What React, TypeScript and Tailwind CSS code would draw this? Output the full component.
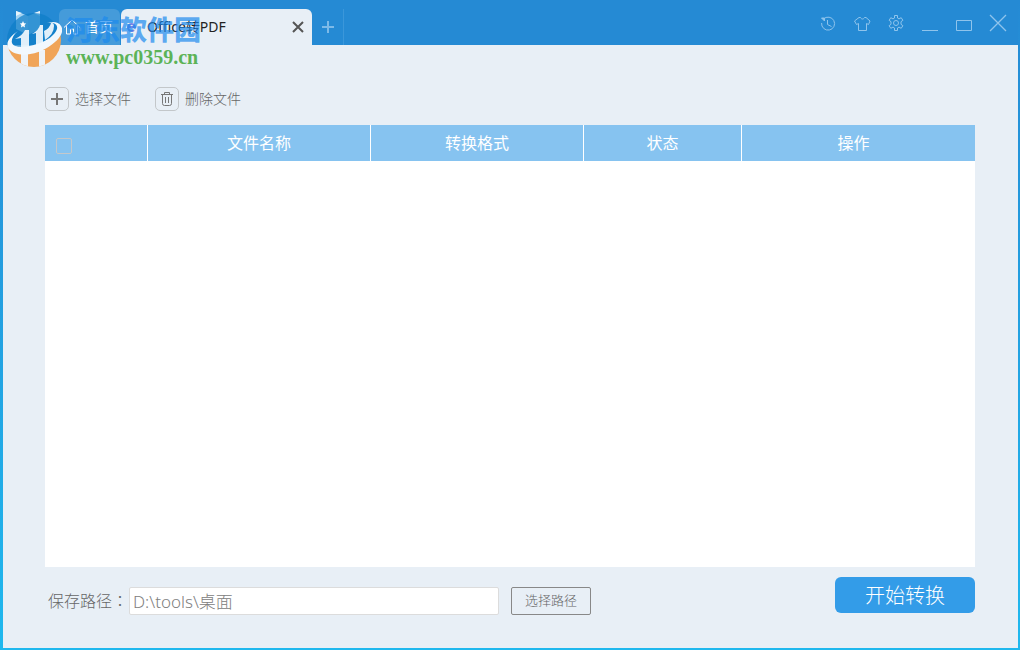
import { useState, type ReactNode } from "react";

const COLUMNS = [
  { id: "name", label: "文件名称", width: "w-[223px]" },
  { id: "format", label: "转换格式", width: "w-[213px]" },
  { id: "status", label: "状态", width: "w-[158px]" },
  { id: "action", label: "操作", width: "pr-[10px]" },
];

function AppLogo() {
  return (
    <svg width="24" height="24" viewBox="0 0 24 24" aria-hidden="true">
      <path d="M0 0 12 5v19L0 18z" fill="#a5d4f3" />
      <path d="M12 5 24 0v18l-12 6z" fill="#8cc8f0" />
      <path d="M0 0l6 2-6 3zM24 0l-6 2 6 3z" fill="#e6f3fb" />
    </svg>
  );
}

function SiteMark() {
  return (
    <svg width="56" height="58" viewBox="0 0 56 58" aria-hidden="true">
      <defs>
        <clipPath id="disc">
          <circle cx="28" cy="30" r="27" />
        </clipPath>
      </defs>
      <g clipPath="url(#disc)">
        <path d="M0 0h56v26C46 38 30 42 14 42L0 36z" fill="#0d7ec8" fillOpacity="0.7" />
        <path d="M0 36c8 10 24 9 37 1 9-5 14-10 19-18v41H0z" fill="#f0a458" />
        <path d="M15 42h7v16h-7zM33 40h6v18h-6z" fill="#eef3f8" />
      </g>
      <path
        d="M9 29q8-4 10-9h4v17h-8v-9zM26 24q7-4 8-9h3v21l-7 3V23zM38 21q6-3 7-8h1q2 0 2 3 0 8-9 14z"
        fill="#f2f8fd"
        fillOpacity="0.92"
      />
      <path
        d="M12 21C3 27-1 33 3 39c6 8 23 7 36 0 14-8 20-17 16-23-2-4-8-5-14-3 7-1 11 1 10 6-2 6-10 12-20 15-12 4-23 4-25-1-1-3 1-8 6-12z"
        fill="#f2f8fd"
      />
      <path d="M17 11l1 2.200 2.200.3-1.600 1.600.4 2.300-2-1.100-2 1.100.4-2.300-1.600-1.600 2.200-.3z" fill="#fff" />
    </svg>
  );
}

function Watermark() {
  return (
    <div className="pointer-events-none absolute left-[6px] top-[10px] flex gap-1">
      <SiteMark />
      <div className="flex flex-col whitespace-nowrap">
        <span className="h-[35px] font-['Noto_Sans_CJK_SC',sans-serif] text-[27px] font-black leading-[38px] text-[#1c8aee]/70">
          河东软件园
        </span>
        <span className="font-['Liberation_Serif',serif] text-xl font-bold leading-6 text-[#5cb357]">
          www.pc0359.cn
        </span>
      </div>
    </div>
  );
}

function WindowButton({ label, children }: { label: string; children: ReactNode }) {
  return (
    <button
      aria-label={label}
      className="flex h-[18px] w-[18px] items-center justify-center text-[#8fc4ec] hover:text-white"
    >
      <svg width="18" height="18" viewBox="0 0 18 18" fill="none" stroke="currentColor">
        {children}
      </svg>
    </button>
  );
}

function TitleBar() {
  return (
    <header className="flex h-[45px] items-end bg-[#258ad4]">
      <div className="flex h-[34px] w-[56px] items-start pl-[13px]">
        <AppLogo />
      </div>
      <nav className="flex items-end gap-px">
        <button className="flex h-9 w-[61px] items-center gap-1 rounded-t-md bg-white/15 pl-1 text-sm text-white">
          <svg width="18" height="16" viewBox="0 0 18 16" fill="none" stroke="currentColor" aria-hidden="true">
            <path d="M1 8.500 9 1l8 7.500M3.500 7v8h4v-5h3v5h4V7" />
          </svg>
          首页
        </button>
        <div className="flex h-9 w-[191px] items-center rounded-t-md bg-[#e8eff6] pl-1 pr-2">
          <svg width="14" height="14" viewBox="0 0 14 14" fill="none" stroke="#7a83e6" strokeWidth="2" aria-hidden="true">
            <path d="M3 7h7a3.500 3.500 0 1 0-1 3" />
          </svg>
          <span className="flex-1 pl-2 text-sm text-[#222]">Office转PDF</span>
          <button aria-label="关闭标签" className="text-[#555]">
            <svg width="12" height="12" viewBox="0 0 12 12" stroke="currentColor" strokeWidth="2">
              <path d="M1 1l10 10M11 1 1 11" />
            </svg>
          </button>
        </div>
      </nav>
      <button
        aria-label="新建标签"
        className="flex h-9 w-8 items-center justify-center border-r border-[#3b97da] text-[#7dbae8]"
      >
        <svg width="12" height="12" viewBox="0 0 12 12" stroke="currentColor" strokeWidth="2">
          <path d="M6 0v12M0 6h12" />
        </svg>
      </button>
      <div className="ml-auto flex gap-4 self-start pr-[11px] pt-[14px]">
        <WindowButton label="历史记录">
          <path d="M4.500 5A6.500 6.500 0 1 1 2.600 9M8.500 6v4.500l4 2" />
          <path d="M2.500 4h3v3z" fill="currentColor" />
        </WindowButton>
        <WindowButton label="换肤">
          <path d="M6 3.500 1.500 7l2 3.500 2-1v7h8v-7l2 1L17 7l-4-3.500h-1.500c-.8 2-3.200 2-4 0z" />
        </WindowButton>
        <WindowButton label="设置">
          <path d="M7.500 1.500h3V4l1.500.9 2.200-1.200 1.700 2.600L14 7.700v2.600l1.900 1.400-1.700 2.600-2.200-1.200-1.500.9v2.500h-3V14L6 13.100l-2.200 1.200-1.700-2.600L4 10.300V7.700L2.100 6.300l1.700-2.600L6 4.900 7.500 4z" />
          <circle cx="9" cy="9" r="2.500" />
        </WindowButton>
        <WindowButton label="最小化">
          <path d="M1 16.500h16" />
        </WindowButton>
        <WindowButton label="最大化">
          <path d="M1.500 6.500h15v10h-15z" />
        </WindowButton>
        <WindowButton label="关闭">
          <path d="M1 1l16 16M17 1 1 17" strokeWidth="1.300" />
        </WindowButton>
      </div>
    </header>
  );
}

function ToolButton({ label, children }: { label: string; children: ReactNode }) {
  return (
    <button className="flex items-center gap-[6px] text-sm font-light text-[#666]">
      <span className="flex h-6 w-6 items-center justify-center rounded-[5px] border border-[#c3c7ca]">
        {children}
      </span>
      {label}
    </button>
  );
}

export default function App() {
  const [allChecked, setAllChecked] = useState(false);
  const [path, setPath] = useState("D:\\tools\\桌面");

  return (
    <div className="relative flex min-h-screen flex-col bg-linear-to-b from-[#258ad4] to-[#1fb8ee] pb-[2px] pl-[3px] pr-[2px] font-['Noto_Sans','Noto_Sans_CJK_SC',sans-serif]">
      <TitleBar />
      <main className="flex flex-1 flex-col bg-[#e8eff6] pt-[42px] pr-[43px] pb-[33px] pl-[42px]">
        <div className="flex gap-6">
          <ToolButton label="选择文件">
            <svg width="14" height="14" viewBox="0 0 14 14" stroke="#777" strokeWidth="2">
              <path d="M7 1v12M1 7h12" />
            </svg>
          </ToolButton>
          <ToolButton label="删除文件">
            <svg width="14" height="16" viewBox="0 0 14 16" fill="none" stroke="#777">
              <path d="M1 3.500h12M4.500 3.500v-2h5v2M2.500 3.500v9q0 2 2 2h5q2 0 2-2v-9M5.500 6v6M8.500 6v6" />
            </svg>
          </ToolButton>
        </div>

        <div className="mt-[14px] flex-1 bg-white">
          <table className="w-full table-fixed border-separate border-spacing-0">
            <thead>
              <tr className="h-9 bg-[#86c3f0] text-base text-white">
                <th className="w-[103px] border-r border-white py-0 pr-0 pl-[11px] text-left">
                  <input
                    type="checkbox"
                    aria-label="全选"
                    checked={allChecked}
                    onChange={(e) => setAllChecked(e.target.checked)}
                    className="mt-[6px] block h-4 w-4 appearance-none rounded-[2px] border border-[#c4c8cb] checked:bg-white"
                  />
                </th>
                {COLUMNS.map((col) => (
                  <th
                    key={col.id}
                    className={`border-r border-white font-normal last:border-r-0 ${col.width}`}
                  >
                    {col.label}
                  </th>
                ))}
              </tr>
            </thead>
          </table>
        </div>

        <div className="mt-[10px] flex items-start">
          <div className="mt-[10px] flex flex-1 items-center">
            <label
              htmlFor="save-path"
              className="w-[84px] pl-[3px] text-base leading-6 font-light whitespace-nowrap text-[#666]"
            >
              保存路径<span className="font-['Noto_Sans_CJK_TC',sans-serif] leading-none">：</span>
            </label>
            <input
              id="save-path"
              value={path}
              onChange={(e) => setPath(e.target.value)}
              className="h-7 w-[370px] rounded-[2px] border border-[#dcdcdc] bg-white px-[3px] pb-[2px] text-[17px] font-light text-[#808080] outline-none"
            />
            <button className="ml-3 h-7 w-20 rounded-[2px] border border-[#888] text-[13px] font-light text-[#666]">
              选择路径
            </button>
          </div>
          <button className="h-9 w-[140px] rounded-md bg-[#339ce8] pt-[2px] text-xl font-light text-white">
            开始转换
          </button>
        </div>
      </main>
      <Watermark />
    </div>
  );
}
